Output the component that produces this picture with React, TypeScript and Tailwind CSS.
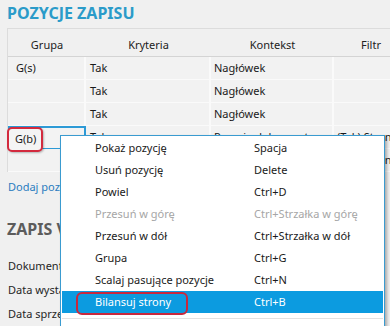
const rows = [
  { grupa: "G(s)", kryteria: "Tak", kontekst: "Nagłówek", filtr: "" },
  { grupa: "", kryteria: "Tak", kontekst: "Nagłówek", filtr: "" },
  { grupa: "", kryteria: "Tak", kontekst: "Nagłówek", filtr: "" },
  { grupa: "", kryteria: "Tak", kontekst: "Pozycja dokumentu", filtr: "(Tak) Strona Winien", selected: true },
  { grupa: "", kryteria: "", kontekst: "", filtr: "(Tak) Strona Ma i Winien" },
];

const menuItems = [
  { label: "Pokaż pozycję", shortcut: "Spacja" },
  { label: "Usuń pozycję", shortcut: "Delete" },
  { label: "Powiel", shortcut: "Ctrl+D" },
  { label: "Przesuń w górę", shortcut: "Ctrl+Strzałka w górę", disabled: true },
  { label: "Przesuń w dół", shortcut: "Ctrl+Strzałka w dół" },
  { label: "Grupa", shortcut: "Ctrl+G" },
  { label: "Scalaj pasujące pozycje", shortcut: "Ctrl+N" },
  { label: "Bilansuj strony", shortcut: "Ctrl+B", active: true },
];

export default function App() {
  return (
    <div
      className="relative h-[326px] w-[390px] overflow-hidden bg-[#f0f0f0] text-[11px] text-[#1a1a1a]"
      style={{ fontFamily: '"Noto Sans", "Open Sans", sans-serif' }}
    >
      <h2 className="flex h-[28px] items-center px-[7px] pb-[2px] text-[16px] font-bold leading-none text-[#2b9bc9]">
        POZYCJE ZAPISU
      </h2>

      <div className="ml-[7px] w-[400px] border-l border-t border-[#dcdcdc]">
        <div className="grid h-[28px] grid-cols-[78px_125px_123px_74px] items-center border-b border-[#d4d4d4] pt-[6px] text-[#222]">
          <div className="text-center">Grupa</div>
          <div className="text-center">Kryteria</div>
          <div className="text-center">Kontekst</div>
          <div className="text-center">Filtr</div>
        </div>
        {rows.map((row, i) => (
          <div key={i} className="grid h-[23px] grid-cols-[78px_125px_123px_74px]">
            <div
              className={`flex items-center border-b border-r-2 border-b-[#fafafa] border-r-[#fafafa] pl-[8px] ${
                row.selected ? "border-2 border-[#2d9ad6]! bg-[#f3f3f3]" : "bg-[#f2f2f2]"
              }`}
            >
              {row.grupa}
            </div>
            <div className="flex items-center border-b border-r-2 border-[#fafafa] bg-[#f2f2f2] pl-[4px]">
              {row.kryteria}
            </div>
            <div className="flex items-center border-b border-r-2 border-[#fafafa] bg-[#f2f2f2] pl-[3px]">
              {row.kontekst}
            </div>
            <div className="flex items-center overflow-hidden whitespace-nowrap border-b border-[#fafafa] bg-[#f2f2f2] pl-[3px]">
              {row.filtr}
            </div>
          </div>
        ))}
      </div>

      <div className="mt-[7px] px-[8px] text-[#2a7cc0]">Dodaj pozycję</div>

      <h2 className="mt-[25px] px-[7px] text-[16px] font-bold leading-none text-[#5c5c5c]">
        ZAPIS VAT
      </h2>

      <div className="mt-[21px] flex flex-col gap-[7px] px-[8px] text-[#262626]">
        <div className="h-[17px]">Dokument</div>
        <div className="h-[17px]">Data wystawienia</div>
        <div className="h-[17px]">Data sprzedaży</div>
      </div>

      {/* highlight around selected group cell */}
      <div className="absolute left-[7px] top-[127px] flex h-[25px] w-[36px] items-center rounded-[5px] border-2 border-[#d32a3e] bg-[#f4f4f4] pl-[6px] shadow-[1px_1px_2px_rgba(0,0,0,0.25)]">
        G(b)
      </div>

      {/* context menu */}
      <div className="absolute left-[60px] top-[135px] w-[325px] border border-[#3a9bd0] bg-white pt-[1px] shadow-[2px_2px_3px_rgba(0,0,0,0.3)]">
        {menuItems.map((item) => (
          <div
            key={item.label}
            className={`mx-px flex h-[22px] items-center ${
              item.active ? "bg-[#0c9be0] text-white" : item.disabled ? "text-[#a6a6a6]" : "text-[#1a1a1a]"
            }`}
          >
            <span className="w-[192px] pl-[33px]">{item.label}</span>
            <span>{item.shortcut}</span>
          </div>
        ))}
        <div className="mx-px mt-[5px] border-t border-[#e2e2e2]" />
        <div className="h-[20px]" />
      </div>

      {/* highlight around active menu item */}
      <div className="absolute left-[76px] top-[292px] h-[23px] w-[112px] rounded-[6px] border-2 border-[#c8283d]" />
    </div>
  );
}
